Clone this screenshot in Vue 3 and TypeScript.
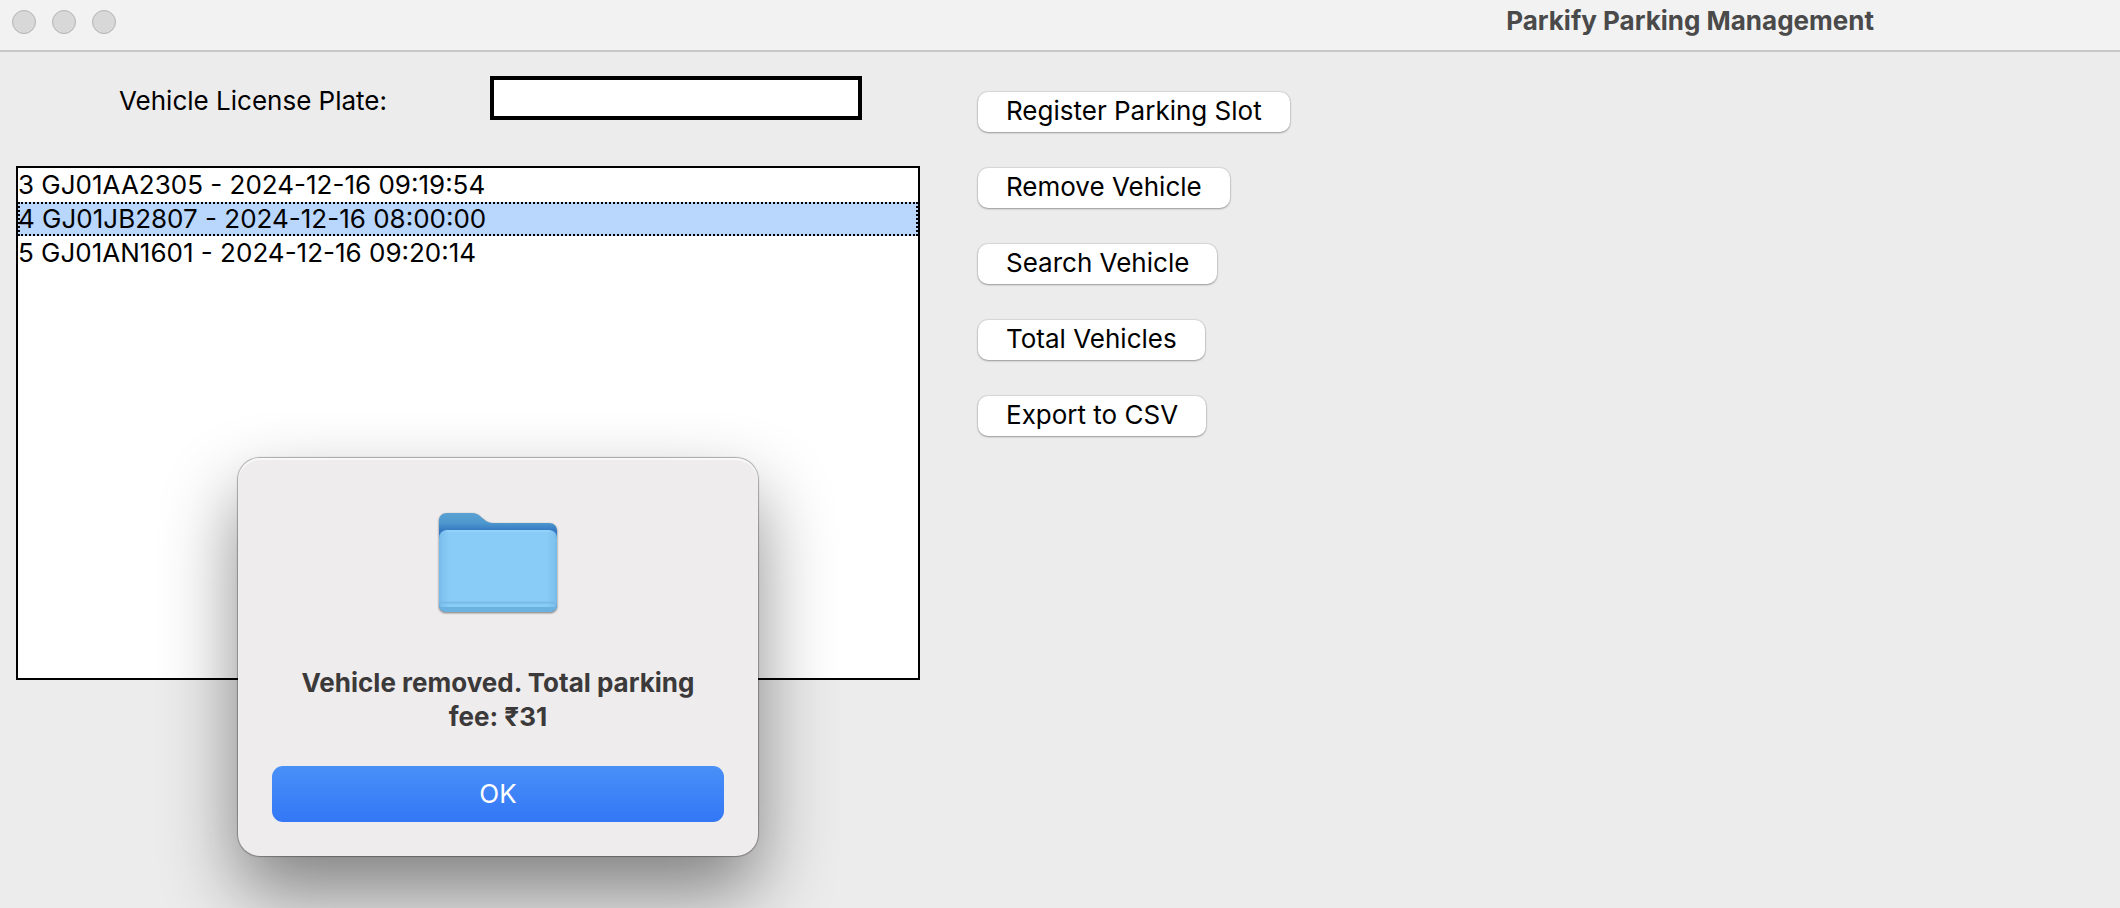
<script setup lang="ts">
import { ref } from 'vue'

interface Vehicle {
  slot: number
  plate: string
  parkedAt: string
}

const licensePlate = ref('')
const selectedSlot = ref(4)

const vehicles: Vehicle[] = [
  { slot: 3, plate: 'GJ01AA2305', parkedAt: '2024-12-16 09:19:54' },
  { slot: 4, plate: 'GJ01JB2807', parkedAt: '2024-12-16 08:00:00' },
  { slot: 5, plate: 'GJ01AN1601', parkedAt: '2024-12-16 09:20:14' },
]

const actions: string[] = [
  'Register Parking Slot',
  'Remove Vehicle',
  'Search Vehicle',
  'Total Vehicles',
  'Export to CSV',
]
</script>

<template>
  <div class="window">
    <header class="titlebar">
      <div class="lights">
        <button class="light" type="button" aria-label="Close"></button>
        <button class="light" type="button" aria-label="Minimize"></button>
        <button class="light" type="button" aria-label="Zoom"></button>
      </div>
      <h1 class="title">Parkify Parking Management</h1>
    </header>

    <main class="content">
      <section class="parking">
        <div class="field">
          <label class="field-label" for="plate">Vehicle License Plate:</label>
          <input id="plate" v-model="licensePlate" class="field-input" type="text" />
        </div>
        <ul class="listbox" role="listbox" aria-label="Parked vehicles">
          <li
            v-for="vehicle in vehicles"
            :key="vehicle.slot"
            class="row"
            :class="{ selected: vehicle.slot === selectedSlot }"
            role="option"
            tabindex="0"
            :aria-selected="vehicle.slot === selectedSlot"
            @click="selectedSlot = vehicle.slot"
          >{{ vehicle.slot }} {{ vehicle.plate }} - {{ vehicle.parkedAt }}</li>
        </ul>
      </section>

      <nav class="actions" aria-label="Actions">
        <button v-for="action in actions" :key="action" class="action" type="button">{{ action }}</button>
      </nav>
    </main>

    <div class="dialog" role="alertdialog" aria-labelledby="message">
      <svg class="folder" viewBox="0 0 124 108" width="124" height="108" aria-hidden="true">
        <defs>
          <linearGradient id="back" x1="0" y1="0" x2="0" y2="1">
            <stop offset="0" stop-color="#5ba1d3" />
            <stop offset="0.1" stop-color="#4d98ce" />
            <stop offset="0.18" stop-color="#3577c2" />
            <stop offset="1" stop-color="#3577c2" />
          </linearGradient>
          <linearGradient id="front" x1="0" y1="0" x2="1" y2="0">
            <stop offset="0" stop-color="#76bae8" />
            <stop offset="0.03" stop-color="#80c3f0" />
            <stop offset="0.09" stop-color="#89ccf7" />
            <stop offset="0.91" stop-color="#89ccf7" />
            <stop offset="0.97" stop-color="#80c3f0" />
            <stop offset="1" stop-color="#76bae8" />
          </linearGradient>
        </defs>
        <path
          d="M3 11C3 6 6 3 11 3H36C40 3 42 4 45 7L50 11C52 12 54 13 57 13H113C118 13 121 16 121 21V94C121 99 118 102 113 102H11C6 102 3 99 3 94Z"
          fill="url(#back)"
        />
        <rect x="3" y="20" width="118" height="82" rx="8" fill="url(#front)" />
        <path d="M10 21H114" stroke="#9bd6fb" />
        <path d="M3 92H121" stroke="#7bbde8" />
        <path d="M3 93H121" stroke="#74b5e1" />
        <path d="M3 97H121L120 99Q118 102 113 102H11Q6 102 4 99Z" fill="#6cb2e0" />
      </svg>
      <p id="message" class="message">Vehicle removed. Total parking fee: ₹31</p>
      <button class="ok" type="button">OK</button>
    </div>
  </div>
</template>

<style>
html,
body {
  margin: 0;
  background: #ececec;
}
</style>

<style scoped>
.window {
  position: relative;
  box-sizing: border-box;
  min-height: 100vh;
  overflow: hidden;
  background: #ececec;
  color: #000;
  font-family: Inter, "Liberation Sans", sans-serif;
  font-size: 26px;
  line-height: 34px;
}

.titlebar {
  display: flex;
  align-items: flex-start;
  justify-content: space-between;
  box-sizing: border-box;
  height: 52px;
  padding: 4px 246px 0 12px;
  border-bottom: 2px solid #c8c8c8;
  background: #f2f2f2;
}

.lights {
  display: flex;
  gap: 16px;
  padding-top: 6px;
}

.light {
  width: 24px;
  height: 24px;
  padding: 0;
  border: 1px solid #b4b4b4;
  border-radius: 50%;
  background: #d8d8d8;
}

.title {
  margin: 0;
  color: #4a4a4a;
  font-size: 26px;
  font-weight: 700;
  line-height: 34px;
}

.content {
  display: grid;
  grid-template-columns: 904fr 1142fr;
  gap: 58px;
  padding: 24px 0 0 16px;
}

.field {
  display: flex;
  align-items: center;
  padding-right: 58px;
}

.field-label {
  flex: 1;
  padding-top: 6px;
  text-align: center;
}

.field-input {
  box-sizing: border-box;
  width: 372px;
  height: 44px;
  padding: 0 4px;
  border: 4px solid #000;
  border-radius: 0;
  outline: none;
  background: #fff;
  color: #000;
  font: inherit;
}

.listbox {
  box-sizing: border-box;
  height: 514px;
  margin: 46px 0 0;
  padding: 0;
  border: 2px solid #000;
  background: #fff;
  list-style: none;
}

.row {
  height: 34px;
  white-space: nowrap;
  cursor: default;
}

.row.selected {
  outline: 2px dotted #000;
  outline-offset: -2px;
  background: #b9d6fd;
}

.actions {
  display: flex;
  flex-direction: column;
  align-items: flex-start;
  gap: 36px;
  padding-top: 16px;
}

.action {
  height: 40px;
  padding: 0 28px 2px;
  border: 0;
  border-radius: 10px;
  background: #fff;
  box-shadow: 0 0 1px 1px rgba(0, 0, 0, 0.08), 0 1px 2px rgba(0, 0, 0, 0.3);
  color: #000;
  font: inherit;
  white-space: nowrap;
}

.dialog {
  position: absolute;
  top: 458px;
  left: 238px;
  display: flex;
  flex-direction: column;
  align-items: center;
  box-sizing: border-box;
  width: 520px;
  padding: 52px 34px 34px;
  border-radius: 22px;
  background: #eeecec;
  box-shadow: inset 0 2px 1px rgba(255, 255, 255, 0.7), 0 0 1px 1px rgba(0, 0, 0, 0.3),
    0 36px 76px rgba(0, 0, 0, 0.46);
}

.folder {
  filter: drop-shadow(0 1px 1px rgba(0, 0, 0, 0.5));
}

.message {
  margin: 48px 0 32px;
  padding: 0 20px;
  color: #3b3939;
  font-weight: 700;
  text-align: center;
}

.ok {
  width: 100%;
  height: 56px;
  padding: 0;
  border: 0;
  border-radius: 11px;
  background: linear-gradient(#4990f8, #3377f6);
  color: #fff;
  font: inherit;
}
</style>
